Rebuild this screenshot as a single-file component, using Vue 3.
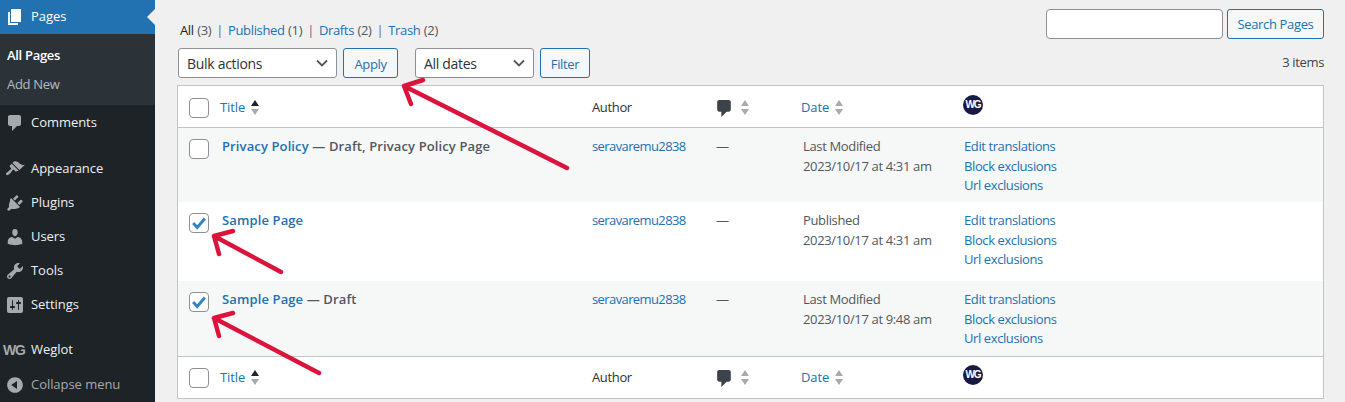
<script setup>
const P = {
  pages: 'M6 15V2h10v13H6zm-1 1h8v2H3V5h2v11z',
  comments: 'M5 2h9c1.1 0 2 .9 2 2v7c0 1.1-.9 2-2 2h-2l-5 5v-5H5c-1.1 0-2-.9-2-2V4c0-1.1.9-2 2-2z',
  appearance: 'M14.48 11.06L7.41 3.99l1.5-1.5c.5-.56 2.3-.47 3.51.32 1.21.8 1.43 1.28 2.91 2.1 1.18.64 2.45 1.26 4.45.85zm-.71.71L6.7 4.7 4.93 6.47c-.39.39-.39 1.02 0 1.41l1.06 1.06c.39.39.39 1.03 0 1.42-.6.6-1.43 1.11-2.21 1.69-.35.26-.7.53-1.01.84C1.43 13.23.4 14.89 1.3 15.79c.91.91 2.57-.13 3.92-1.48.31-.31.58-.66.85-1.02.57-.78 1.08-1.61 1.69-2.21.39-.39 1.02-.39 1.41 0l1.06 1.06c.39.39 1.02.39 1.41 0z',
  plugins: 'M13.11 4.36L9.87 7.6 8 5.73l3.24-3.24c.35-.34 1.05-.2 1.56.32.52.51.66 1.21.31 1.55zm-8 1.77l.91-1.12 9.01 9.01-1.19.84c-.71.71-2.63 1.16-3.82 1.16H6.14L4.9 17.26c-.59.59-1.54.59-2.12 0-.59-.58-.59-1.53 0-2.12l1.24-1.24v-1.88c0-1.19.45-3.11 1.09-3.89zm7.26 3.97l3.24-3.24c.34-.35 1.04-.21 1.55.31.52.51.66 1.21.31 1.55l-3.24 3.25z',
  users: 'M10 9.25c-2.27 0-2.73-3.44-2.73-3.44C7 4.02 7.82 2 9.97 2c2.16 0 2.98 2.02 2.71 3.81 0 0-.41 3.44-2.68 3.44zm0 2.57L12.72 10c2.39 0 4.52 2.33 4.52 4.53v2.49s-3.65 1.13-7.24 1.13c-3.65 0-7.24-1.13-7.24-1.13v-2.49c0-2.25 1.94-4.48 4.47-4.48z',
  tools: 'M16.68 9.77c-1.34 1.34-3.3 1.67-4.95.99l-5.41 6.52c-.99.99-2.59.99-3.58 0s-.99-2.59 0-3.57l6.52-5.42c-.68-1.65-.35-3.61.99-4.95 1.28-1.28 3.12-1.62 4.72-1.06l-2.89 2.89 2.82 2.82 2.86-2.87c.53 1.58.18 3.39-1.08 4.65zM3.81 16.21c.4.39 1.04.39 1.43 0 .4-.4.4-1.04 0-1.43-.39-.4-1.03-.4-1.43 0-.39.39-.39 1.03 0 1.43z',
  settings: 'M18 16V4c0-1.1-.9-2-2-2H4c-1.1 0-2 .9-2 2v12c0 1.1.9 2 2 2h12c1.1 0 2-.9 2-2zM8 11h1c.55 0 1 .45 1 1s-.45 1-1 1H8v1.5c0 .28-.22.5-.5.5s-.5-.22-.5-.5V13H6c-.55 0-1-.45-1-1s.45-1 1-1h1V5.5c0-.28.22-.5.5-.5s.5.22.5.5V11zm5-2h-1c-.55 0-1-.45-1-1s.45-1 1-1h1V5.5c0-.28.22-.5.5-.5s.5.22.5.5V7h1c.55 0 1 .45 1 1s-.45 1-1 1h-1v5.5c0 .28-.22.5-.5.5s-.5-.22-.5-.5V9z',
  collapse: 'M10 2.16c4.33 0 7.84 3.51 7.84 7.84s-3.51 7.84-7.84 7.84S2.16 14.33 2.16 10 5.71 2.16 10 2.16zm2 11.72V6.12L6.18 9.97z'
}
const group1 = [{ label: 'Appearance', icon: P.appearance }, { label: 'Plugins', icon: P.plugins }, { label: 'Users', icon: P.users }, { label: 'Tools', icon: P.tools }, { label: 'Settings', icon: P.settings }]
const rows = [
  { cls: 'row-a', title: 'Privacy Policy', state: ' — Draft, Privacy Policy Page', checked: false, status: 'Last Modified', date: '2023/10/17 at 4:31 am' },
  { cls: 'row-b', title: 'Sample Page', state: '', checked: true, status: 'Published', date: '2023/10/17 at 4:31 am' },
  { cls: 'row-c', title: 'Sample Page', state: ' — Draft', checked: true, status: 'Last Modified', date: '2023/10/17 at 9:48 am' }
]
</script>

<template>
  <div class="page">
    <aside class="side">
      <div class="item current">
        <svg class="ico" viewBox="0 0 20 20"><path :d="P.pages" /></svg>
        <span>Pages</span>
      </div>
      <div class="sub">
        <div class="sub-on">All Pages</div>
        <div class="sub-off">Add New</div>
      </div>
      <div class="item">
        <svg class="ico" viewBox="0 0 20 20"><path :d="P.comments" /></svg>
        <span>Comments</span>
      </div>
      <div class="group">
        <div v-for="g in group1" :key="g.label" class="item">
          <svg class="ico" viewBox="0 0 20 20"><path :d="g.icon" /></svg>
          <span>{{ g.label }}</span>
        </div>
      </div>
      <div class="item">
        <span class="wg-mark">WG</span>
        <span>Weglot</span>
      </div>
      <div class="item collapse">
        <svg class="ico" viewBox="0 0 20 20"><path :d="P.collapse" /></svg>
        <span>Collapse menu</span>
      </div>
    </aside>

    <main class="main">
      <div class="top">
        <div class="views">
          <b>All</b> <i>(3)</i><em>|</em><a>Published</a> <i>(1)</i><em>|</em><a>Drafts</a> <i>(2)</i><em>|</em><a>Trash</a> <i>(2)</i>
        </div>
        <div class="search">
          <div class="input"></div>
          <div class="btn btn-search">Search Pages</div>
        </div>
      </div>
      <div class="nav">
        <div class="select sel-bulk">Bulk actions
          <svg class="chev" viewBox="0 0 12 8"><path d="M1 1.5l5 5 5-5" /></svg>
        </div>
        <div class="btn btn-apply">Apply</div>
        <div class="select sel-dates">All dates
          <svg class="chev" viewBox="0 0 12 8"><path d="M1 1.5l5 5 5-5" /></svg>
        </div>
        <div class="btn btn-filter">Filter</div>
        <div class="count">3 items</div>
      </div>

      <div class="table">
        <div class="grid thead">
          <div class="cell"><span class="cb"></span></div>
          <div class="cell"><a class="th-link">Title</a><span class="sort"><u class="up dark"></u><u class="down"></u></span></div>
          <div class="cell dark-text">Author</div>
          <div class="cell">
            <svg class="cmt" viewBox="0 0 20 20"><path :d="P.comments" /></svg>
            <span class="sort"><u class="up"></u><u class="down"></u></span>
          </div>
          <div class="cell"><a class="th-link">Date</a><span class="sort"><u class="up"></u><u class="down"></u></span></div>
          <div class="cell"><span class="wg-round">WG</span></div>
        </div>
        <div v-for="r in rows" :key="r.cls" class="grid row" :class="r.cls">
          <div class="cell-t check"><span class="cb" :class="{ on: r.checked }">
            <svg v-if="r.checked" viewBox="0 0 20 20"><path d="M3.5 10l4.5 5L16.5 5" /></svg>
          </span></div>
          <div class="cell-t title"><strong><a>{{ r.title }}</a>{{ r.state }}</strong></div>
          <div class="cell-t"><a class="author">seravaremu2838</a></div>
          <div class="cell-t">—</div>
          <div class="cell-t date">{{ r.status }}<br />{{ r.date }}</div>
          <div class="cell-t links"><a>Edit translations</a><a>Block exclusions</a><a>Url exclusions</a></div>
        </div>
        <div class="grid tfoot">
          <div class="cell"><span class="cb"></span></div>
          <div class="cell"><a class="th-link">Title</a><span class="sort"><u class="up dark"></u><u class="down"></u></span></div>
          <div class="cell dark-text">Author</div>
          <div class="cell">
            <svg class="cmt" viewBox="0 0 20 20"><path :d="P.comments" /></svg>
            <span class="sort"><u class="up"></u><u class="down"></u></span>
          </div>
          <div class="cell"><a class="th-link">Date</a><span class="sort"><u class="up"></u><u class="down"></u></span></div>
          <div class="cell"><span class="wg-round">WG</span></div>
        </div>
      </div>
    </main>

    <svg class="arrows" viewBox="0 0 1345 402" width="1345" height="402">
      <g>
        <path d="M567 168L404 86M423 80L404 86L411 104" />
        <path d="M281 272L214 236M233 231L214 236L219 254" />
        <path d="M319 373L214 318M233 313L214 318L219 336" />
      </g>
    </svg>
  </div>
</template>

<style>
html, body { margin: 0; overflow: hidden; background: #f0f0f1; }
</style>

<style scoped>
.page { position: relative; display: flex; width: 1345px; height: 402px; overflow: hidden; background: #f0f0f1; font: 13px/19.5px "Open Sans", sans-serif; letter-spacing: -.35px; color: #50575e; }
a { color: #2271b1; }
i { font-style: normal; color: #50575e; }
.side { flex: none; width: 155px; height: 402px; background: #1d2327; color: #f0f0f1; letter-spacing: -.05px; }
.item { display: flex; align-items: center; box-sizing: border-box; height: 34px; padding-top: 2px; font-size: 13px; color: #f0f0f1; position: relative; }
.ico { flex: none; width: 20px; height: 20px; margin: 0 6px 0 5px; fill: #a7aaad; }
.current { background: #2271b1; color: #fff; padding-top: 0; }
.current .ico { fill: #fff; }
.current::after { content: ""; position: absolute; right: 0; top: 9px; border: 8px solid transparent; border-right-color: #f0f0f1; border-left: 0; }
.sub { height: 71px; background: #2c3338; padding: 11px 7px 0; box-sizing: border-box; letter-spacing: -.3px; }
.sub-on { color: #fff; font-weight: 600; height: 29px; line-height: 20px; }
.sub-off { color: rgba(240, 246, 252, .7); line-height: 20px; }
.group { margin: 12px 0 11px; }
.wg-mark { flex: none; width: 31px; box-sizing: border-box; padding-left: 3px; font: 700 14px/20px "Liberation Sans", sans-serif; letter-spacing: -1.3px; color: #a7aaad; }
.collapse { margin-top: 1px; color: #a7aaad; }
.main { flex: 1; padding: 9px 21px 0 22px; min-width: 0; }
.top { display: flex; justify-content: space-between; align-items: flex-start; height: 39px; }
.views { padding: 12px 0 0 3px; white-space: nowrap; word-spacing: .4px; }
.views b { color: #1d2327; font-weight: 400; }
.views em { font-style: normal; margin: 0 5px; color: #646970; }
.search { display: flex; gap: 4px; }
.input { width: 175px; height: 28px; background: #fff; border: 1px solid #8c8f94; border-radius: 4px; }
.btn { box-sizing: border-box; height: 30px; line-height: 28px; border: 1px solid #2271b1; border-radius: 3px; background: #f6f7f7; color: #2271b1; text-align: center; }
.btn-search { width: 97px; }
.btn-apply { width: 55px; margin-left: 6px; line-height: 30px; }
.btn-filter { width: 50px; margin-left: 6px; line-height: 30px; }
.nav { display: flex; align-items: flex-start; height: 37px; }
.select { position: relative; box-sizing: border-box; height: 30px; line-height: 30px; padding-left: 8px; border: 1px solid #8c8f94; border-radius: 3px; background: #fff; color: #2c3338; font-size: 14px; letter-spacing: -.3px; }
.sel-bulk { width: 159px; margin-left: 1px; }
.sel-dates { width: 119px; margin-left: 17px; }
.chev { position: absolute; right: 8px; top: 10px; width: 12px; height: 8px; fill: none; stroke: #50575e; stroke-width: 1.8; }
.count { margin-left: auto; padding-top: 5px; color: #3c434a; }
.table { border: 1px solid #c3c4c7; background: #fff; box-sizing: border-box; height: 314px; width: 1147px; }
.grid { display: grid; grid-template-columns: 34px 372px 124px 85px 162px 1fr; }
.thead { height: 41px; border-bottom: 1px solid #c3c4c7; }
.thead .cell { padding-top: 2px; }
.tfoot { height: 41px; border-top: 1px solid #c3c4c7; }
.cell { display: flex; align-items: center; padding-left: 8px; }
.cell:first-child { padding-left: 11px; }
.th-link { letter-spacing: -.1px; }
.dark-text { color: #2c3338; }
.cell-t { padding: 9px 0 0 8px; }
.cell-t.check { padding: 11px 0 0 11px; }
.row-a { height: 74px; background: #f6f7f7; }
.row-b { height: 79px; background: #fff; }
.row-c { height: 75px; background: #f6f7f7; }
.cell-t.title { padding-left: 10px; letter-spacing: .12px; }
.cell-t.date { padding-left: 10px; }
.cell-t.links { padding-left: 9px; display: flex; flex-direction: column; letter-spacing: -.4px; }
.author { letter-spacing: -.6px; }
.title strong { font-weight: 600; color: #50575e; }
.cb { display: block; box-sizing: border-box; width: 20px; height: 20px; background: #fff; border: 1px solid #8c8f94; border-radius: 4px; }
.cb svg { display: block; width: 18px; height: 18px; fill: none; stroke: #3582c4; stroke-width: 3.2; }
.sort { display: inline-flex; flex-direction: column; gap: 3px; margin-left: 6px; }
.sort u { display: block; width: 0; height: 0; border: 4.5px solid transparent; }
.sort .up { border-top: 0; border-bottom: 6px solid #a7aaad; }
.sort .down { border-bottom: 0; border-top: 6px solid #a7aaad; }
.sort .dark { border-bottom-color: #1d2327; }
.cmt { flex: none; width: 21px; height: 21px; fill: #3c434a; margin: 2px 0 0 -2px; }
.wg-round { display: flex; align-items: center; justify-content: center; width: 20px; height: 20px; margin: -5px 0 0; border-radius: 50%; background: #181a45; color: #fff; font: 700 10px/20px "Liberation Sans", sans-serif; letter-spacing: -1px; }
.arrows { position: absolute; left: 0; top: 0; pointer-events: none; }
.arrows path { fill: none; stroke: #dc143c; stroke-width: 4.5; stroke-linecap: round; stroke-linejoin: round; }
</style>
